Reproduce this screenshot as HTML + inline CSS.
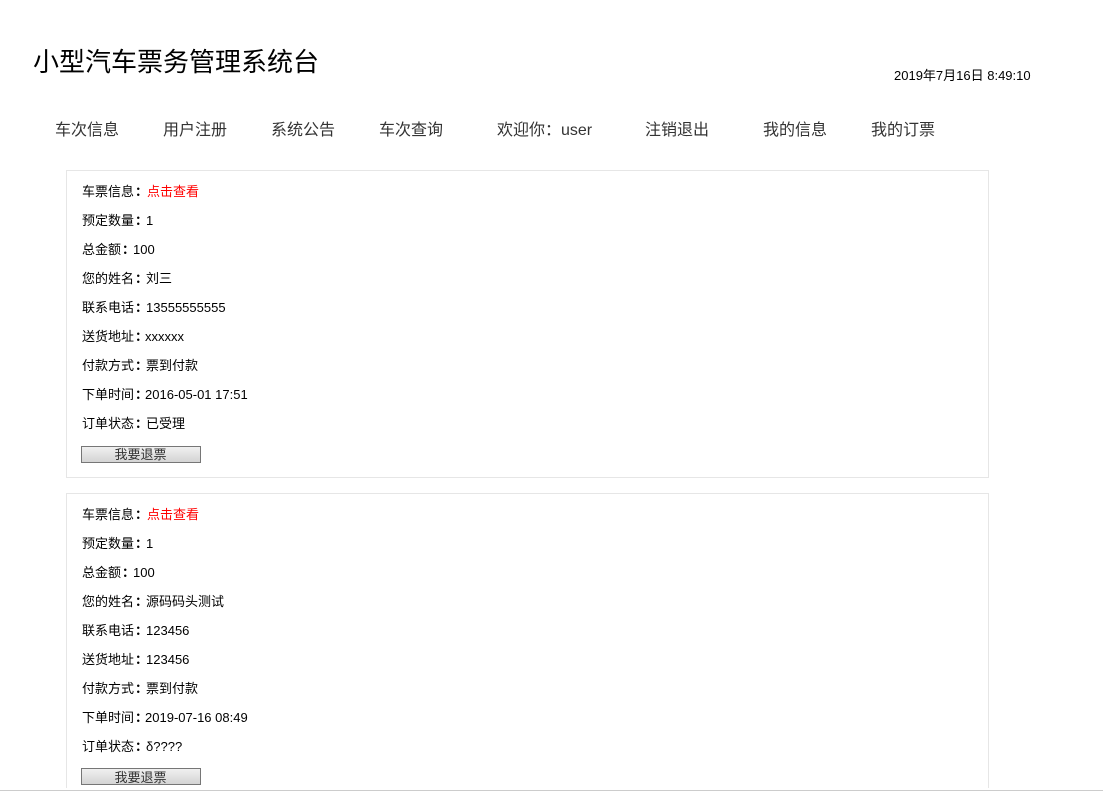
<!DOCTYPE html>
<html lang="zh-CN">
<head>
<meta charset="utf-8">
<title>小型汽车票务管理系统台</title>
<style>
html,body{margin:0;padding:0;width:1103px;height:791px;overflow:hidden;background:#fff}
body{position:relative;font-family:"Liberation Sans","Noto Sans CJK SC",sans-serif;color:#000}
.a{position:absolute;white-space:nowrap}
.title{left:33px;top:45px;font-size:26px;line-height:34px;color:#000}
.date{left:894px;top:68px;font-size:13px;line-height:16px;color:#000}
.nav{top:121px;font-size:16px;line-height:20px;color:#333}
.box{position:absolute;left:66px;width:921px;border:1px solid #e6e6e6;background:#fff}
.row{position:absolute;left:15px;top:0;font-size:13px;line-height:16px;white-space:nowrap;color:#000}
.c{font-family:"Noto Sans CJK JP",sans-serif;font-weight:700;position:relative;left:1px}
.v1{margin-left:-1px}
.v2{margin-left:-2px}
.red{color:#f00}
.btn{position:absolute;left:14px;width:120px;height:17px;box-sizing:border-box;border:1px solid #767676;padding-right:1px;background:linear-gradient(#f0f0f0,#d4d4d4);font-size:13px;line-height:15px;text-align:center;color:#333}
.line{position:absolute;left:0;top:790px;width:1103px;height:1px;background:#ccc}
.clip{position:absolute;left:0;top:0;width:1103px;height:788px;overflow:hidden}
</style>
</head>
<body>
<div class="a title">小型汽车票务管理系统台</div>
<div class="a date">2019年7月16日 8:49:10</div>
<div class="a nav" style="left:55px">车次信息</div>
<div class="a nav" style="left:163px">用户注册</div>
<div class="a nav" style="left:271px">系统公告</div>
<div class="a nav" style="left:379px">车次查询</div>
<div class="a nav" style="left:497px">欢迎你：user</div>
<div class="a nav" style="left:645px">注销退出</div>
<div class="a nav" style="left:763px">我的信息</div>
<div class="a nav" style="left:871px">我的订票</div>
<div class="clip">
<div class="box" style="top:170px;height:306px">
<div class="row" style="top:12px">车票信息<span class="c">：</span><span class="red">点击查看</span></div>
<div class="row" style="top:41px">预定数量<span class="c">：</span><span class="v1">1</span></div>
<div class="row" style="top:70px">总金额<span class="c">：</span><span class="v1">100</span></div>
<div class="row" style="top:99px">您的姓名<span class="c">：</span><span class="v1">刘三</span></div>
<div class="row" style="top:128px">联系电话<span class="c">：</span><span class="v1">13555555555</span></div>
<div class="row" style="top:157px">送货地址<span class="c">：</span><span class="v2">xxxxxx</span></div>
<div class="row" style="top:186px">付款方式<span class="c">：</span><span class="v1">票到付款</span></div>
<div class="row" style="top:215px">下单时间<span class="c">：</span><span class="v2">2016-05-01 17:51</span></div>
<div class="row" style="top:244px">订单状态<span class="c">：</span><span class="v1">已受理</span></div>
<div class="btn" style="top:275px">我要退票</div>
</div>
<div class="box" style="top:493px;height:306px">
<div class="row" style="top:12px">车票信息<span class="c">：</span><span class="red">点击查看</span></div>
<div class="row" style="top:41px">预定数量<span class="c">：</span><span class="v1">1</span></div>
<div class="row" style="top:70px">总金额<span class="c">：</span><span class="v1">100</span></div>
<div class="row" style="top:99px">您的姓名<span class="c">：</span><span class="v1">源码码头测试</span></div>
<div class="row" style="top:128px">联系电话<span class="c">：</span><span class="v1">123456</span></div>
<div class="row" style="top:157px">送货地址<span class="c">：</span><span class="v1">123456</span></div>
<div class="row" style="top:186px">付款方式<span class="c">：</span><span class="v1">票到付款</span></div>
<div class="row" style="top:215px">下单时间<span class="c">：</span><span class="v2">2019-07-16 08:49</span></div>
<div class="row" style="top:244px">订单状态<span class="c">：</span><span class="v1">δ????</span></div>
<div class="btn" style="top:274px;padding-top:1px">我要退票</div>
</div>
</div>
<div class="line"></div>
</body>
</html>
